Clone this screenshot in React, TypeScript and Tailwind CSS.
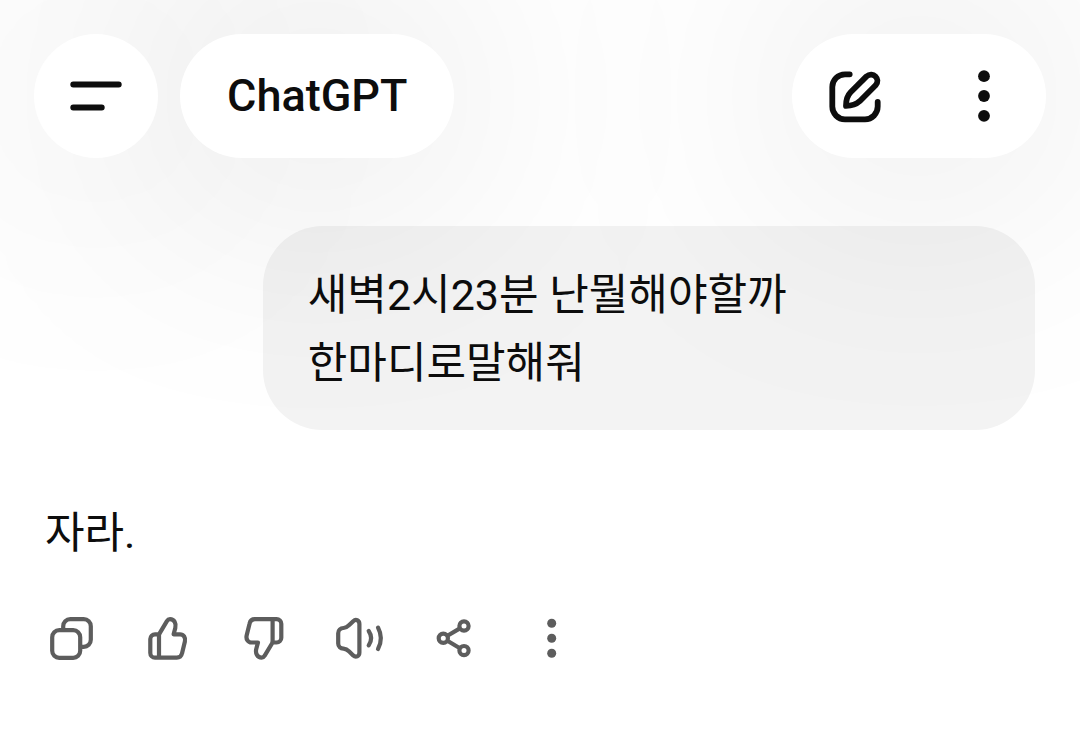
import React from "react";

interface IconProps {
  children: React.ReactNode;
}

interface ActionType {
  label: string;
  icon: React.ReactNode;
}

const ActionIcon = ({ children }: IconProps) => (
  <svg
    viewBox="0 0 48 48"
    className="w-12 h-12 overflow-visible"
    fill="none"
    stroke="currentColor"
    strokeWidth="4.2"
    strokeLinecap="round"
    strokeLinejoin="round"
    aria-hidden="true"
  >
    {children}
  </svg>
);

const ThumbShape = () => (
  <>
    <path d="M15 20.3H11A4.7 4.7 0 0 0 6.3 25V39A4.7 4.7 0 0 0 11 43.7H32.8C35.6 43.7 37.4 42.1 38 39.4L40.9 27.6C41.9 23.6 39.6 20.3 36 20.3H29.6L31.3 14C32.5 9.4 30.2 5.2 26 5.2C24.6 5.2 23.7 5.8 22.9 7.1L15 20.3Z" />
    <path d="M15 20.3V43.7" strokeLinecap="butt" />
  </>
);

const actions: ActionType[] = [
  {
    label: "복사",
    icon: (
      <ActionIcon>
        <rect x="4.2" y="16.2" width="28" height="27.6" rx="7" />
        <path d="M15.2 16V12.2A7 7 0 0 1 22.2 5.2H35.8A7 7 0 0 1 42.8 12.2V25.8A7 7 0 0 1 35.8 32.8H33" />
      </ActionIcon>
    ),
  },
  {
    label: "좋아요",
    icon: (
      <ActionIcon>
        <ThumbShape />
      </ActionIcon>
    ),
  },
  {
    label: "싫어요",
    icon: (
      <ActionIcon>
        <g transform="rotate(180 23.8 24.4)">
          <ThumbShape />
        </g>
      </ActionIcon>
    ),
  },
  {
    label: "소리 내어 읽기",
    icon: (
      <ActionIcon>
        <path d="M2.2 19.2C2.2 16 4.5 14.2 7.5 14C10 13.8 11.5 12.8 13.2 11.1L17.2 7.2C19.8 4.8 23.4 6.2 23.4 10V38.6C23.4 42.4 19.8 43.8 17.2 41.4L13.2 37.5C11.5 35.8 10 34.8 7.5 34.6C4.5 34.4 2.2 32.6 2.2 29.4Z" />
        <path d="M32.7 17C35.7 21.4 35.7 27 32.7 31.4M42 13.6C45.6 20.4 45.6 28.4 42 35" />
      </ActionIcon>
    ),
  },
  {
    label: "공유",
    icon: (
      <ActionIcon>
        <circle cx="11.3" cy="24.3" r="4.6" />
        <circle cx="32" cy="12" r="4.6" />
        <circle cx="32" cy="36.6" r="4.6" />
        <path d="M15.4 21.8L27.9 14.4M15.4 26.8L27.9 34.2" strokeLinecap="butt" />
      </ActionIcon>
    ),
  },
  {
    label: "더 보기",
    icon: (
      <ActionIcon>
        <g fill="currentColor" stroke="none">
          <circle cx="23.7" cy="9.3" r="4.5" />
          <circle cx="23.7" cy="24.3" r="4.5" />
          <circle cx="23.7" cy="39.3" r="4.5" />
        </g>
      </ActionIcon>
    ),
  },
];

// wide soft shadow, kept under every button of the header
const glow =
  "relative before:absolute before:inset-0 before:-z-10 before:rounded-full before:bg-black/17 before:blur-[130px]";

const Header = () => {
  return (
    <header className="relative z-10 flex items-center justify-between p-[34px]">
      <div className="flex items-center gap-[22px]">
        <button
          aria-label="메뉴"
          className={`flex items-center justify-center rounded-full w-[124px] h-[124px] bg-white ${glow}`}
        >
          <svg viewBox="0 0 52 52" className="w-[52px] h-[52px]" stroke="currentColor" strokeWidth="6" strokeLinecap="round">
            <path d="M3.3 14.4H48.7M3.3 37.4H31.7" />
          </svg>
        </button>
        <button className={`rounded-full h-[124px] px-[47px] text-[45px] font-medium bg-white ${glow}`}>
          ChatGPT
        </button>
      </div>
      <div className={`flex items-center gap-[6px] rounded-full bg-white ${glow}`}>
        <button aria-label="새 채팅" className="flex items-center justify-center w-[124px] h-[124px]">
          <svg
            viewBox="-1 0 52 52"
            className="w-[52px] h-[52px] overflow-visible"
            fill="none"
            stroke="currentColor"
            strokeWidth="5.8"
            strokeLinecap="round"
            strokeLinejoin="round"
          >
            <path d="M20.7 4.3H16A12.7 12.7 0 0 0 3.3 17V36.6A12.7 12.7 0 0 0 16 49.3H36A12.7 12.7 0 0 0 48.7 36.6V32" />
            <path d="M17 35.9C17 31 17.5 26.4 21.6 22.3L37.5 6.4C43.9 0.9 52.1 9.1 46.6 15.3L30.7 31.2C27 34.6 22 35.8 17 35.9Z" />
          </svg>
        </button>
        <button aria-label="옵션" className="flex items-center justify-center w-[124px] h-[124px]">
          <svg viewBox="0 0 52 52" className="w-[52px] h-[52px]" fill="currentColor">
            <circle cx="26" cy="6.2" r="5.9" />
            <circle cx="26" cy="26" r="5.9" />
            <circle cx="26" cy="45.8" r="5.9" />
          </svg>
        </button>
      </div>
    </header>
  );
};

const App = () => {
  return (
    <div className="min-h-screen overflow-hidden bg-white text-[#0d0d0d] font-[Roboto,'Noto_Sans_CJK_KR',sans-serif]">
      <Header />
      <main className="pt-[34px] text-[43px] leading-[68px]">
        {/* user message */}
        <div className="flex justify-end px-[45px]">
          <p className="w-[78%] rounded-[60px] bg-[#f3f3f3] px-[45px] pt-[35px] pb-[33px]">
            새벽2시23분 난뭘해야할까
            <br />
            한마디로말해줘
          </p>
        </div>

        {/* answer */}
        <p className="px-[45px] pt-[69px]">자라.</p>
        <div className="flex gap-12 px-12 pt-[47px] text-[#5d5d5d]">
          {actions.map((action) => (
            <button key={action.label} aria-label={action.label}>
              {action.icon}
            </button>
          ))}
        </div>
      </main>
    </div>
  );
};

export default App;
